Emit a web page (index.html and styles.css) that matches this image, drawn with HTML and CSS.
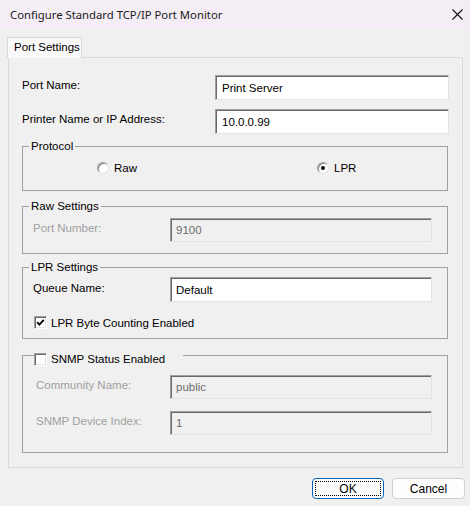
FILE: index.html
```html
<!DOCTYPE html>
<html lang="en">

<head>
    <meta charset="UTF-8">
    <meta name="viewport" content="width=device-width, initial-scale=1.0">
    <title>Configure Standard TCP/IP Port Monitor</title>
    <link rel="stylesheet" href="styles.css">
</head>

<body>

    <div class="dialog">
        <div class="titlebar">
            <span class="title">Configure Standard TCP/IP Port Monitor</span>
            <svg class="close" width="11" height="11" viewBox="0 0 11 11">
                <path d="M0.5 0.5 L10.5 10.5 M10.5 0.5 L0.5 10.5" stroke="#111" stroke-width="1.1" fill="none" />
            </svg>
        </div>

        <div class="client">
            <div class="tabs">
                <div class="tab active">Port Settings</div>
            </div>

            <div class="panel">
                <div class="row">
                    <label>Port Name:</label>
                    <input class="edit" type="text" value="Print Server">
                </div>
                <div class="row">
                    <label>Printer Name or IP Address:</label>
                    <input class="edit" type="text" value="10.0.0.99">
                </div>

                <fieldset class="group protocol">
                    <legend>Protocol</legend>
                    <div class="radios">
                        <label class="radio"><span class="dot"></span>Raw</label>
                        <label class="radio"><span class="dot checked"></span>LPR</label>
                    </div>
                </fieldset>

                <fieldset class="group raw">
                    <legend>Raw Settings</legend>
                    <div class="field disabled">
                        <label>Port Number:</label>
                        <input class="edit" type="text" value="9100" disabled>
                    </div>
                </fieldset>

                <fieldset class="group lpr">
                    <legend>LPR Settings</legend>
                    <div class="field">
                        <label>Queue Name:</label>
                        <input class="edit tall" type="text" value="Default">
                    </div>
                    <label class="check">
                        <span class="box">
                            <svg width="9" height="9" viewBox="0 0 9 9">
                                <polyline points="1.2,4.2 3.4,6.6 7.8,1.8" stroke="#000" stroke-width="1.8" fill="none" />
                            </svg>
                        </span>
                        LPR Byte Counting Enabled
                    </label>
                </fieldset>

                <fieldset class="group snmp">
                    <legend>
                        <span class="box"></span>
                        SNMP Status Enabled
                    </legend>
                    <div class="field disabled">
                        <label>Community Name:</label>
                        <input class="edit" type="text" value="public" disabled>
                    </div>
                    <div class="field disabled">
                        <label>SNMP Device Index:</label>
                        <input class="edit" type="text" value="1" disabled>
                    </div>
                </fieldset>
            </div>

            <div class="buttons">
                <button class="btn default">OK</button>
                <button class="btn">Cancel</button>
            </div>
        </div>
    </div>

</body>

</html>
```

FILE: styles.css
```css
* {
    box-sizing: border-box;
}

body {
    margin: 0;
    background: #f0f0f0;
    font-family: "Liberation Sans", Arial, sans-serif;
    font-size: 11.5px;
    color: #000;
}

.dialog {
    width: 470px;
    height: 506px;
    display: flex;
    flex-direction: column;
}

/* title bar */
.titlebar {
    flex: none;
    height: 28px;
    display: flex;
    align-items: center;
    justify-content: space-between;
    padding: 0 7px 0 10px;
    background: #f5edf5;
}

.title {
    font-family: "Noto Sans", sans-serif;
    font-size: 11.3px;
    color: #1a1a1a;
}

.close {
    display: block;
    flex: none;
}

.client {
    padding: 9px 0 0 7px;
}

/* tab strip */
.tabs {
    display: flex;
    height: 20px;
}

.tab {
    position: relative;
    z-index: 1;
    width: 75px;
    height: 21px;
    padding-left: 6px;
    line-height: 19px;
    border: 1px solid #d9d9d9;
    border-bottom: none;
    background: #f9f9f9;
}

.panel {
    margin-left: 1px;
    width: 455px;
    height: 411px;
    border: 1px solid #d9d9d9;
    padding: 17px 13px 0 13px;
}

/* label + edit rows */
.row {
    display: grid;
    grid-template-columns: 1fr 234px;
    align-items: center;
}

.row label {
    padding-bottom: 5px;
}

.row+.row {
    margin-top: 9px;
}

.edit {
    width: 100%;
    height: 24px;
    margin: 0;
    padding: 0 0 0 5px;
    border: 1px solid;
    border-color: #a0a0a0 #e3e3e3 #e3e3e3 #a0a0a0;
    box-shadow: inset 1px 1px 0 #696969;
    background: #fff;
    font: inherit;
    color: #000;
    outline: none;
}

.row .edit {
    height: 25px;
    padding-left: 6px;
}

.edit.tall {
    height: 25px;
}

.edit:disabled {
    background: #f0f0f0;
    color: #6d6d6d;
    -webkit-text-fill-color: #6d6d6d;
    opacity: 1;
}

.disabled label {
    color: #a0a0a0;
}

/* group boxes */
.group {
    margin: 0 1px 0 0;
    padding: 0;
    min-width: 0;
    border: 1px solid #a0a0a0;
}

.group legend {
    margin-left: 6px;
    padding: 0 2px;
    line-height: 14px;
}

.field {
    display: grid;
    grid-template-columns: 1fr 262px;
    align-items: center;
    padding: 0 15px 0 10px;
}

.field label {
    padding-bottom: 4px;
}

.protocol {
    margin-top: 5px;
}

.radios {
    display: flex;
    padding: 8px 0 15px 74px;
}

.radio {
    display: flex;
    align-items: center;
    height: 14px;
}

.radio:first-child {
    width: 220px;
}

.dot {
    width: 12px;
    height: 12px;
    margin-right: 5px;
    border-radius: 50%;
    border: 1px solid;
    border-color: #a0a0a0 #e3e3e3 #e3e3e3 #a0a0a0;
    box-shadow: inset 1px 1px 0 #8a8a8a;
    background: #fff;
    display: flex;
    align-items: center;
    justify-content: center;
}

.dot.checked::after {
    content: "";
    width: 4px;
    height: 4px;
    border-radius: 50%;
    background: #000;
}

.raw {
    margin-top: 8px;
}

.raw .field {
    padding-top: 5px;
    padding-bottom: 11px;
}

.lpr {
    margin-top: 6px;
}

.lpr .field {
    padding-top: 3px;
}

/* checkboxes */
.check {
    display: flex;
    align-items: center;
    gap: 4px;
    margin-top: 14px;
    padding: 0 0 9px 11px;
}

.box {
    flex: none;
    width: 13px;
    height: 13px;
    border: 1px solid;
    border-color: #a0a0a0 #fff #fff #a0a0a0;
    box-shadow: inset 1px 1px 0 #696969, inset -1px -1px 0 #e3e3e3;
    background: #fff;
    display: flex;
    align-items: center;
    justify-content: center;
}

.snmp {
    margin-top: 6px;
    padding-bottom: 17px;
}

.snmp legend {
    display: flex;
    align-items: center;
    gap: 4px;
    margin-left: 11px;
    padding: 8px 18px 0 0;
    line-height: 13px;
}

.snmp .field {
    padding-left: 13px;
}

.snmp .field:first-of-type {
    padding-top: 9px;
}

.snmp .field+.field {
    margin-top: 12px;
}

/* dialog buttons */
.buttons {
    display: flex;
    justify-content: flex-end;
    gap: 8px;
    padding: 10px 5px 0 0;
}

.btn {
    width: 73px;
    height: 21px;
    padding: 0;
    border: 1px solid #d0d0d0;
    border-radius: 4px;
    background: #fdfdfd;
    font-family: "Liberation Sans", Arial, sans-serif;
    font-size: 12px;
    color: #000;
}

.btn.default {
    width: 72px;
    border-color: #0067c0;
    outline: 1px dotted #000;
    outline-offset: -4px;
}
```
